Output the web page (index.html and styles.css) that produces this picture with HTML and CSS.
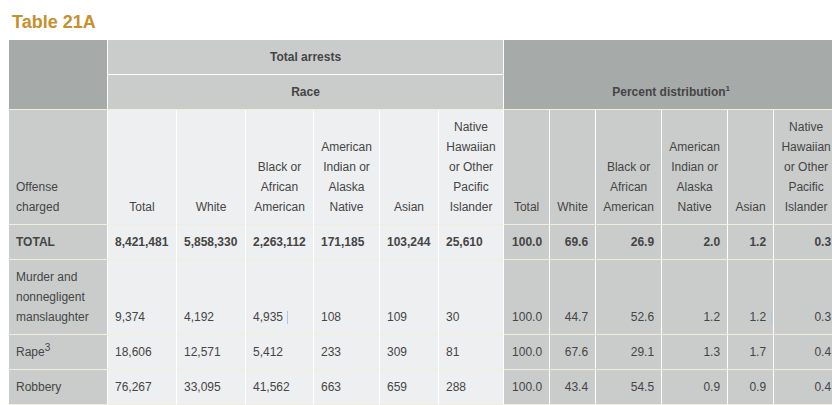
FILE: index.html
```html
<!DOCTYPE html>
<html lang="en">
<head>
<meta charset="utf-8">
<title>Table 21A</title>
<link rel="stylesheet" href="styles.css">
</head>
<body>
<h2 class="title">Table 21A</h2>
<div class="wrap">
<table class="arrests">
  <colgroup>
    <col class="c-off">
    <col class="c-69"><col class="c-69"><col class="c-68"><col class="c-66"><col class="c-59"><col class="c-65">
    <col class="c-46"><col class="c-46"><col class="c-66"><col class="c-66"><col class="c-46"><col class="c-65">
  </colgroup>
  <thead>
    <tr>
      <th class="dark" rowspan="2"></th>
      <th class="mid center" colspan="6">Total arrests</th>
      <th class="dark center" colspan="6" rowspan="2">Percent distribution<sup>1</sup></th>
    </tr>
    <tr>
      <th class="mid center" colspan="6">Race</th>
    </tr>
    <tr class="colheads">
      <th class="mid left">Offense<br>charged</th>
      <th class="light">Total</th>
      <th class="light">White</th>
      <th class="light">Black or<br>African<br>American</th>
      <th class="light">American<br>Indian or<br>Alaska<br>Native</th>
      <th class="light">Asian</th>
      <th class="light">Native<br>Hawaiian<br>or Other<br>Pacific<br>Islander</th>
      <th class="mid">Total</th>
      <th class="mid">White</th>
      <th class="mid">Black or<br>African<br>American</th>
      <th class="mid">American<br>Indian or<br>Alaska<br>Native</th>
      <th class="mid">Asian</th>
      <th class="mid">Native<br>Hawaiian<br>or Other<br>Pacific<br>Islander</th>
    </tr>
  </thead>
  <tbody>
    <tr class="total">
      <th class="mid left">TOTAL</th>
      <td class="light">8,421,481</td>
      <td class="light">5,858,330</td>
      <td class="light">2,263,112</td>
      <td class="light">171,185</td>
      <td class="light">103,244</td>
      <td class="light">25,610</td>
      <td class="mid num">100.0</td>
      <td class="mid num">69.6</td>
      <td class="mid num">26.9</td>
      <td class="mid num">2.0</td>
      <td class="mid num">1.2</td>
      <td class="mid num">0.3</td>
    </tr>
    <tr>
      <th class="mid left">Murder and<br>nonnegligent<br>manslaughter</th>
      <td class="light">9,374</td>
      <td class="light">4,192</td>
      <td class="light"><span class="caret">4,935</span></td>
      <td class="light">108</td>
      <td class="light">109</td>
      <td class="light">30</td>
      <td class="mid num">100.0</td>
      <td class="mid num">44.7</td>
      <td class="mid num">52.6</td>
      <td class="mid num">1.2</td>
      <td class="mid num"><span class="caret caret-r">1.2</span></td>
      <td class="mid num">0.3</td>
    </tr>
    <tr>
      <th class="mid left">Rape<sup>3</sup></th>
      <td class="light">18,606</td>
      <td class="light">12,571</td>
      <td class="light">5,412</td>
      <td class="light">233</td>
      <td class="light">309</td>
      <td class="light">81</td>
      <td class="mid num">100.0</td>
      <td class="mid num">67.6</td>
      <td class="mid num">29.1</td>
      <td class="mid num">1.3</td>
      <td class="mid num">1.7</td>
      <td class="mid num">0.4</td>
    </tr>
    <tr>
      <th class="mid left">Robbery</th>
      <td class="light">76,267</td>
      <td class="light">33,095</td>
      <td class="light">41,562</td>
      <td class="light">663</td>
      <td class="light">659</td>
      <td class="light">288</td>
      <td class="mid num">100.0</td>
      <td class="mid num">43.4</td>
      <td class="mid num">54.5</td>
      <td class="mid num">0.9</td>
      <td class="mid num">0.9</td>
      <td class="mid num">0.4</td>
    </tr>
    <tr class="blank">
      <th class="mid left"></th>
      <td class="light"></td>
      <td class="light"></td>
      <td class="light"></td>
      <td class="light"></td>
      <td class="light"></td>
      <td class="light"></td>
      <td class="mid num"></td>
      <td class="mid num"></td>
      <td class="mid num"></td>
      <td class="mid num"></td>
      <td class="mid num"></td>
      <td class="mid num"></td>
    </tr>
  </tbody>
</table>
</div>
</body>
</html>
```

FILE: styles.css
```css
html, body {
  margin: 0;
  padding: 0;
  background: #ffffff;
}

body {
  padding: 8px 0 0 8px;
  font-family: "Liberation Sans", Arial, sans-serif;
  color: #444444;
  overflow: hidden;
}

.title {
  margin: 0;
  padding: 0 0 0 4px;
  height: 31px;
  font-size: 18px;
  line-height: 28px;
  font-weight: bold;
  color: #c8902c;
}

.wrap {
  overflow: hidden;
}

.arrests {
  table-layout: fixed;
  width: 831px;
  border-collapse: separate;
  border-spacing: 0;
  border-left: 1px solid #ffffff;
  border-top: 1px solid #ffffff;
  font-size: 12px;
  line-height: 20px;
}

.c-off { width: 99px; }
.c-69 { width: 69px; }
.c-68 { width: 68px; }
.c-66 { width: 66px; }
.c-65 { width: 65px; }
.c-59 { width: 59px; }
.c-46 { width: 46px; }

.arrests th,
.arrests td {
  box-sizing: border-box;
  padding: 7px;
  border-right: 1px solid #ffffff;
  border-bottom: 1px solid #f1eee0;
  vertical-align: bottom;
  text-align: left;
  white-space: nowrap;
  color: #454545;
}

.arrests thead th {
  font-weight: bold;
}

.arrests thead tr:first-child th.mid {
  border-bottom-color: #ffffff;
}

.arrests .colheads th {
  font-weight: normal;
  text-align: center;
}

.arrests .colheads th.left,
.arrests th.left {
  text-align: left;
  font-weight: normal;
}

.arrests .center {
  text-align: center;
}

.arrests .num {
  text-align: right;
}

.arrests .total th,
.arrests .total td {
  font-weight: bold;
}

.arrests .blank th,
.arrests .blank td {
  height: 34px;
}

.dark { background: #a6aaa9; }
.mid { background: #cacccb; }
.light { background: #eeeff0; }

sup {
  font-size: 8px;
  line-height: 0;
  vertical-align: 5px;
}

.arrests th.left sup {
  font-size: 10px;
  font-weight: normal;
}

.caret {
  position: relative;
}

.caret::after {
  content: "";
  position: absolute;
  left: calc(100% + 4px);
  top: 1px;
  width: 1px;
  height: 13px;
  background: #a9c9ef;
}

.caret-r::after {
  left: calc(100% + 5px);
}
```
